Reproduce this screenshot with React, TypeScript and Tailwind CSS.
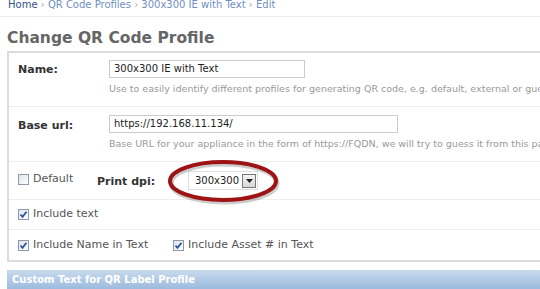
import React from "react";

function Check({ checked }: { checked: boolean }) {
  return (
    <span className="inline-flex w-[11px] h-[11px] border border-[#8f9aa8] bg-gradient-to-br from-[#dfe3e8] to-[#ffffff] items-center justify-center shrink-0">
      {checked && (
        <svg width="9" height="9" viewBox="0 0 9 9">
          <path d="M1.5 4.5 L3.5 6.8 L7.5 1.8" stroke="#2b4fa3" strokeWidth="1.8" fill="none" />
        </svg>
      )}
    </span>
  );
}

export default function App() {
  return (
    <div
      className="relative w-[540px] h-[289px] overflow-hidden bg-white text-[#333]"
      style={{ fontFamily: '"DejaVu Sans", Verdana, sans-serif' }}
    >
      <div className="h-[17px] border-b border-[#ececec] pl-[8px] text-[10px] leading-[10px] text-[#6f8fc0] whitespace-nowrap">
        <span className="text-[#35508a]">Home</span>
        <span className="text-[#aaa]"> › </span>QR Code Profiles
        <span className="text-[#aaa]"> › </span>300x300 IE with Text
        <span className="text-[#aaa]"> › </span>Edit
      </div>
      <h1 className="pl-[7px] pt-[12px] pb-[4px] text-[15.5px] leading-[18px] font-bold text-[#666] whitespace-nowrap">
        Change QR Code Profile
      </h1>
      <div className="ml-[7px] w-[600px] border-2 border-[#dcdcdc] text-[11px]">
        <div className="h-[54px] border-b border-[#eee] flex pl-[9px]">
          <div className="w-[91px] pt-[9px] font-bold text-[#333]">Name:</div>
          <div className="pt-[7px]">
            <div className="w-[196px] h-[18px] border border-[#ccc] px-[4px] text-[10px] leading-[16px] text-[#222]">300x300 IE with Text</div>
            <div className="mt-[6px] text-[9.5px] leading-[10px] text-[#999] whitespace-nowrap">
              Use to easily identify different profiles for generating QR code, e.g. default, external or guest
            </div>
          </div>
        </div>
        <div className="h-[55px] border-b border-[#eee] flex pl-[9px]">
          <div className="w-[91px] pt-[11px] font-bold text-[#333]">Base url:</div>
          <div className="pt-[8px]">
            <div className="w-[289px] h-[18px] border border-[#ccc] px-[4px] text-[10px] leading-[16px] text-[#222]">https://192.168.11.134/</div>
            <div className="mt-[6px] text-[9.5px] leading-[10px] text-[#999] whitespace-nowrap">
              Base URL for your appliance in the form of https://FQDN, we will try to guess it from this page
            </div>
          </div>
        </div>
        <div className="h-[38px] border-b border-[#eee] flex items-start pl-[9px]">
          <div className="w-[79px] flex items-center gap-[4px] pt-[9px] text-[#555]">
            <Check checked={false} />
            <span>Default</span>
          </div>
          <div className="w-[91px] pt-[12px] font-bold text-[#333]">Print dpi:</div>
          <div className="mt-[9px] w-[70px] h-[19px] border border-[#ddd] flex items-center justify-between pl-[6px] pr-[1px] text-[10px] text-[#222]">
            <span>300x300</span>
            <span className="w-[14px] h-[14px] border border-[#777] bg-gradient-to-b from-[#f4f4f4] to-[#d8d8d8] flex items-center justify-center">
              <svg width="7" height="4" viewBox="0 0 7 4"><path d="M0 0 H7 L3.5 4 Z" fill="#222" /></svg>
            </span>
          </div>
        </div>
        <div className="h-[30px] border-b border-[#eee] flex items-center gap-[4px] pl-[9px] text-[#555]">
          <Check checked={true} />
          <span>Include text</span>
        </div>
        <div className="h-[30px] flex items-center pl-[9px] text-[#555]">
          <div className="flex items-center gap-[4px] w-[155px]">
            <Check checked={true} />
            <span>Include Name in Text</span>
          </div>
          <div className="flex items-center gap-[4px]">
            <Check checked={true} />
            <span>Include Asset # in Text</span>
          </div>
        </div>
      </div>
      <div className="ml-[7px] mt-[8px] w-[600px] h-[22px] bg-gradient-to-b from-[#c9daed] to-[#94b6da] pl-[5px] text-[10px] leading-[20px] font-bold text-white">
        Custom Text for QR Label Profile
      </div>
      <svg className="absolute left-[162px] top-[155px]" width="126" height="52" viewBox="0 0 126 52">
        <ellipse cx="62" cy="28" rx="53" ry="19" fill="none" stroke="#00000033" strokeWidth="5" />
        <ellipse cx="61" cy="26" rx="53" ry="19" fill="none" stroke="#9e1414" strokeWidth="4" />
      </svg>
    </div>
  );
}
